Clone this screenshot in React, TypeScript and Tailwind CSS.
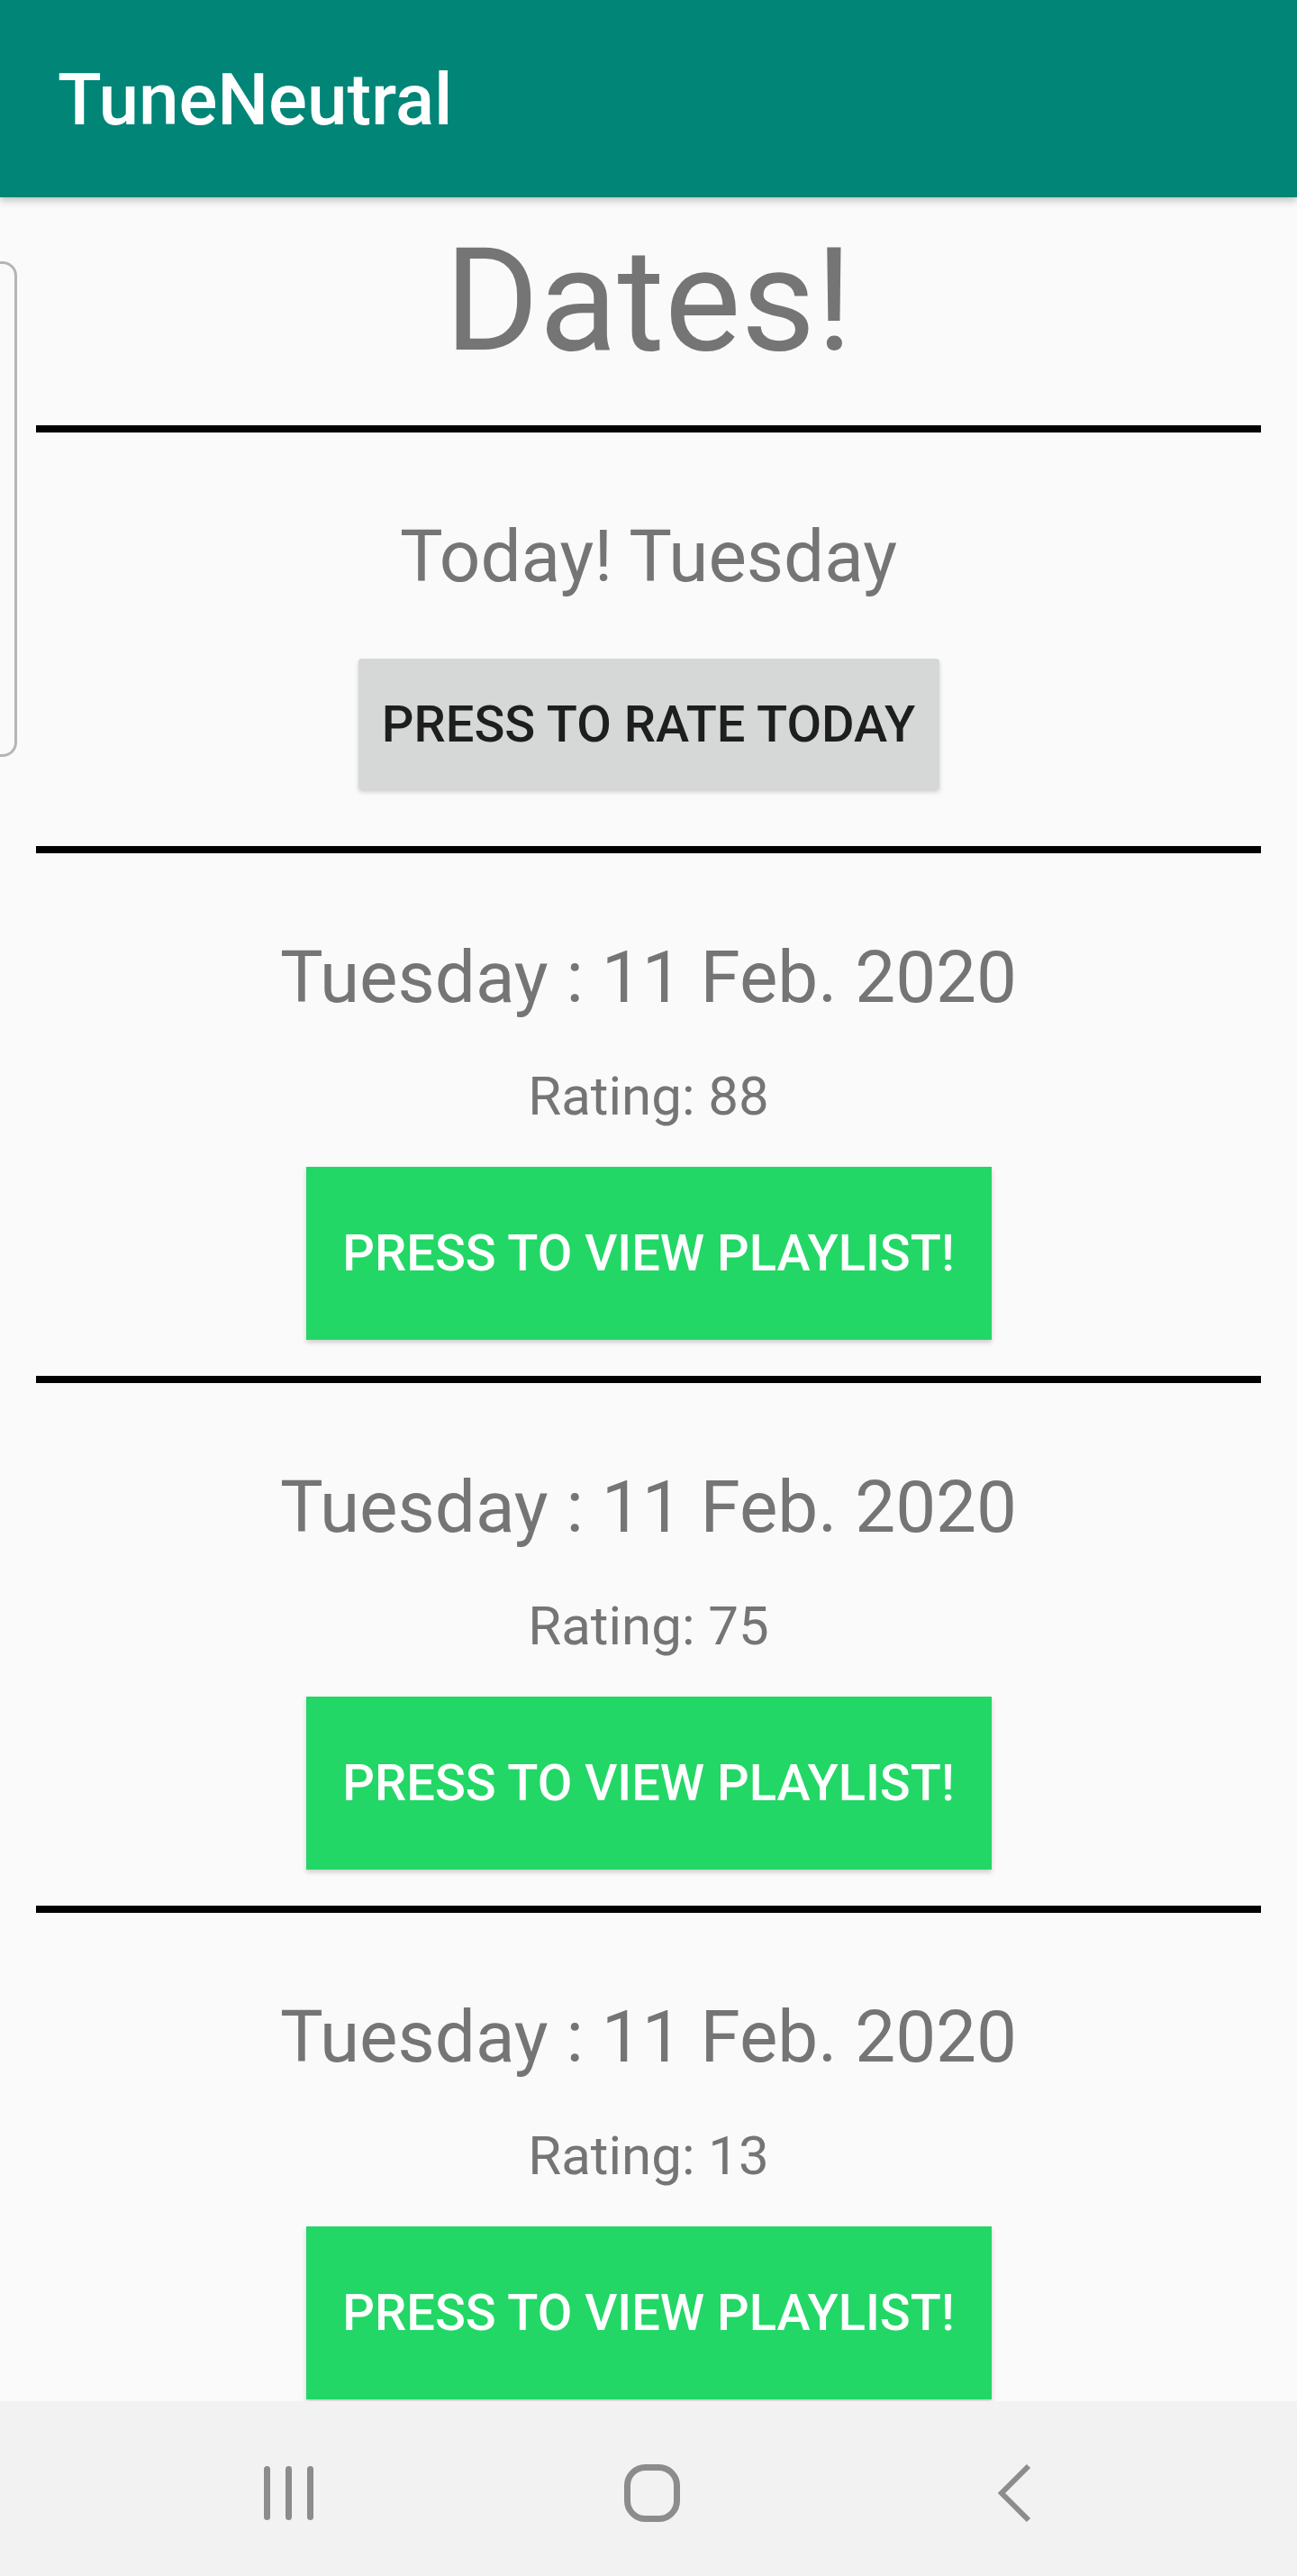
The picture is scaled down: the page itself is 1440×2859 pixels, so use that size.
const font = { fontFamily: "Roboto, 'Noto Sans', sans-serif" };

type Entry = {
  day: string;
  rating: number;
};

const entries: Entry[] = [
  { day: "Tuesday : 11 Feb. 2020", rating: 88 },
  { day: "Tuesday : 11 Feb. 2020", rating: 75 },
  { day: "Tuesday : 11 Feb. 2020", rating: 13 },
];

function Divider() {
  return <div className="h-[8px] w-[1360px] shrink-0 bg-black" />;
}

function DayEntry({ day, rating }: Entry) {
  return (
    <>
      <p className="mt-[98px] text-[80px] leading-none text-[#757575]">{day}</p>
      <p className="mt-[62px] text-[60px] leading-none text-[#757575]">Rating: {rating}</p>
      <button className="mt-[48px] flex h-[192px] w-[761px] shrink-0 items-center justify-center bg-[#22d766] text-[56px] font-medium leading-none text-white shadow-[0_3px_5px_rgba(0,0,0,0.18)]">
        PRESS TO VIEW PLAYLIST!
      </button>
      <div className="mt-[40px]">
        <Divider />
      </div>
    </>
  );
}

function NavBar() {
  return (
    <div className="flex h-[194px] shrink-0 items-center justify-center bg-[#f2f2f2] pl-[8px] pt-[10px]">
      <div className="flex w-[403px] justify-center">
        <svg width="56" height="62" viewBox="0 0 56 62">
          <rect x="0" y="1" width="7" height="60" rx="3.5" fill="#8c8c8c" />
          <rect x="24" y="1" width="7" height="60" rx="3.5" fill="#8c8c8c" />
          <rect x="48" y="1" width="7" height="60" rx="3.5" fill="#8c8c8c" />
        </svg>
      </div>
      <div className="flex w-[403px] justify-center">
        <svg width="64" height="66" viewBox="0 0 64 66">
          <rect x="4.5" y="4.5" width="55" height="57" rx="20" fill="none" stroke="#8c8c8c" strokeWidth="7" />
        </svg>
      </div>
      <div className="flex w-[403px] justify-center">
        <svg width="40" height="66" viewBox="0 0 40 66">
          <polyline points="35,3 5,33 35,63" fill="none" stroke="#8c8c8c" strokeWidth="6" />
        </svg>
      </div>
    </div>
  );
}

export default function App() {
  return (
    <div className="flex h-[2859px] w-[1440px] flex-col overflow-hidden bg-[#fafafa]" style={font}>
      <header className="relative z-10 flex h-[219px] shrink-0 items-center bg-[#008577] pl-[64px] pt-[2px] shadow-[0_4px_8px_rgba(0,0,0,0.22)]">
        <h1 className="text-[80px] font-medium leading-none text-white">TuneNeutral</h1>
      </header>

      <main className="relative flex min-h-0 flex-1 flex-col items-center overflow-hidden">
        <div className="absolute left-[-40px] top-[71px] h-[550px] w-[59px] rounded-[16px] border-[3px] border-[#b5b5b5]" />

        <h2 className="mt-[35px] text-[160px] leading-none text-[#757575]">Dates!</h2>
        <div className="mt-[58px]">
          <Divider />
        </div>

        <p className="mt-[98px] text-[80px] leading-none text-[#757575]">Today! Tuesday</p>
        <button className="mt-[73px] flex h-[145px] w-[645px] shrink-0 items-center justify-center rounded-[4px] bg-[#d6d7d7] text-[56px] font-medium leading-none text-[#1e1e1e] shadow-[0_3px_5px_rgba(0,0,0,0.18)]">
          PRESS TO RATE TODAY
        </button>
        <div className="mt-[63px]">
          <Divider />
        </div>

        {entries.map((e, i) => (
          <DayEntry key={i} day={e.day} rating={e.rating} />
        ))}
      </main>

      <NavBar />
    </div>
  );
}
